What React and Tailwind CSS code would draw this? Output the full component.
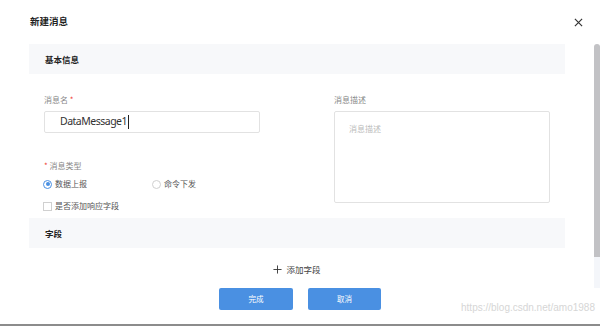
import React, { useState } from "react";

// Dialog for creating a new message
function App() {
  const [msgType, setMsgType] = useState("up"); // "up" = 数据上报, "down" = 命令下发
  const [withResponse, setWithResponse] = useState(false);
  const msgName = "DataMessage1";

  const cjk = "font-['Noto_Sans_CJK_SC',sans-serif]";

  // small radio item
  const Radio = ({ value, label, className = "" }) => (
    <label className={`flex items-center gap-[3px] cursor-pointer ${className}`}>
      <span
        onClick={() => setMsgType(value)}
        className={`flex items-center justify-center w-[9px] h-[9px] rounded-full border ${
          msgType === value ? "border-[#4a90e2]" : "border-[#d0d0d0]"
        }`}
      >
        {msgType === value && <span className="w-[4px] h-[4px] rounded-full bg-[#4a90e2]" />}
      </span>
      <span className="text-[8px] text-[#555]">{label}</span>
    </label>
  );

  return (
    <div className={`relative w-[600px] h-[326px] bg-white overflow-hidden border-b-2 border-[#8c8c8c] ${cjk}`}>
      {/* header */}
      <div className="flex items-center justify-between h-[44px] pl-[30px] pr-[17px]">
        <div className="text-[9.5px] font-bold text-[#222] leading-none">新建消息</div>
        <svg width="9" height="9" viewBox="0 0 10 10" className="mt-[1px]">
          <path d="M1 1 L9 9 M9 1 L1 9" stroke="#333" strokeWidth="1.3" fill="none" />
        </svg>
      </div>

      <div className="pl-[29px] pr-[35px]">
        {/* section: 基本信息 */}
        <div className="flex items-center h-[30px] pl-[16px] bg-[#f7f8fa] text-[8.5px] font-bold text-[#222]">
          基本信息
        </div>

        <div className="flex pl-[15px] pt-[21px]">
          {/* left column */}
          <div className="w-[216px]">
            <div className="h-[10px] leading-[10px] text-[8px] text-[#888]">
              消息名 <span className="text-[#f04134]">*</span>
            </div>
            {/* focused input with caret */}
            <div className="mt-[6px] flex items-center w-[216px] h-[22px] border border-[#e2e2e2] rounded-[2px] pl-[15px] text-[10.5px] tracking-[-0.5px] text-[#333] font-['Noto_Sans',sans-serif]">
              <span>{msgName}</span>
              <span className="ml-[1px] w-[1px] h-[14px] bg-[#222]" />
            </div>
            <div className="mt-[28px] h-[10px] leading-[10px] text-[8px] text-[#888]">
              <span className="text-[#f04134]">*</span> 消息类型
            </div>
            <div className="flex items-center mt-[8px] h-[10px] -ml-[1px]">
              <Radio value="up" label="数据上报" className="w-[109px]" />
              <Radio value="down" label="命令下发" />
            </div>
            <label className="flex items-center gap-[3px] mt-[12px] h-[10px] -ml-[1px] cursor-pointer">
              <span
                onClick={() => setWithResponse(!withResponse)}
                className={`w-[9px] h-[9px] border ${withResponse ? "border-[#4a90e2] bg-[#4a90e2]" : "border-[#d0d0d0]"}`}
              />
              <span className="text-[8px] text-[#555]">是否添加响应字段</span>
            </label>
          </div>

          {/* right column */}
          <div className="ml-[74px] w-[216px]">
            <div className="h-[10px] leading-[10px] text-[8px] text-[#888]">消息描述</div>
            <textarea
              placeholder="消息描述"
              className="mt-[6px] block w-[216px] h-[92px] border border-[#e2e2e2] rounded-[2px] pl-[14px] pt-[11px] text-[8px] text-[#333] placeholder:text-[#bbb] resize-none outline-none"
            />
          </div>
        </div>

        {/* section: 字段 */}
        <div className="mt-[7px] flex items-center h-[30px] pl-[16px] bg-[#f7f8fa] text-[8.5px] font-bold text-[#222]">
          字段
        </div>

        <div className="flex justify-center items-center mt-[15px] h-[12px] gap-[4px] text-[8.5px] text-[#444]">
          <svg width="9" height="9" viewBox="0 0 10 10">
            <path d="M5 0.5 V9.5 M0.5 5 H9.5" stroke="#333" strokeWidth="1" fill="none" />
          </svg>
          <span>添加字段</span>
        </div>
      </div>

      {/* footer buttons */}
      <div className="flex justify-center gap-[15px] mt-[13px]">
        <button className="w-[74px] h-[22px] rounded-[2px] bg-[#4a90e2] text-white text-[7.5px]">完成</button>
        <button className="w-[73px] h-[22px] rounded-[2px] bg-[#4a90e2] text-white text-[7.5px]">取消</button>
      </div>

      {/* scrollbar */}
      <div className="absolute right-0 top-[44px] w-[6px] h-[213px] rounded-t-[3px] bg-[#c2c2c5]" />
      <div className="absolute right-0 top-[257px] w-[6px] h-[31px] bg-[#f4f6fa]" />

      {/* watermark */}
      <div className="absolute right-[5px] top-[300px] text-[10px] text-[#d6d6d6] font-['Liberation_Sans',sans-serif]">
        https://blog.csdn.net/amo1988
      </div>
    </div>
  );
}

export default App;
